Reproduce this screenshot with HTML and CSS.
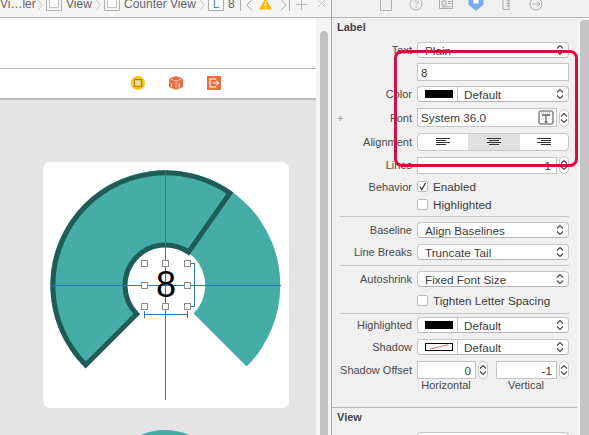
FILE: index.html
```html
<!DOCTYPE html>
<html lang="en">
<head>
    <meta charset="UTF-8">
    <title>Label Attributes</title>
    <link rel="stylesheet" href="styles.css">
</head>
<body>
    <svg class="defs">
        <symbol id="updown" viewBox="0 0 8 12">
            <path d="M1 4.5 4 1.5 7 4.5M1 7.5 4 10.5 7 7.5" fill="none" stroke="#444" stroke-width="1.1"/>
        </symbol>
        <symbol id="viewbox" viewBox="0 0 16 12">
            <path d="M.5 -1V11.5H15.5V-1" fill="#f4f4f4" stroke="#b4b4b4"/>
            <path d="M3.5 -1V8.5H12.5V-1" fill="#fff" stroke="#c4c4c4"/>
        </symbol>
    </svg>

    <div class="editor">
        <div class="crumbs">
            <span class="crumb w-vc">Vi…ler</span>
            <svg class="chev" width="5" height="12" viewBox="0 0 5 12"><path d="M.5 1 4 6 .5 11" fill="none" stroke="#ccc"/></svg>
            <svg class="box" width="16" height="12"><use href="#viewbox"/></svg>
            <span class="crumb w-v">View</span>
            <svg class="chev" width="5" height="12" viewBox="0 0 5 12"><path d="M.5 1 4 6 .5 11" fill="none" stroke="#ccc"/></svg>
            <svg class="box" width="16" height="12"><use href="#viewbox"/></svg>
            <span class="crumb w-cv">Counter View</span>
            <svg class="chev" width="5" height="12" viewBox="0 0 5 12"><path d="M.5 1 4 6 .5 11" fill="none" stroke="#ccc"/></svg>
            <span class="label-box">L</span>
            <span class="crumb w-8">8</span>
            <span class="sep"></span>
            <svg class="nav" width="7" height="12" viewBox="0 0 7 12"><path d="M6 .5 1 6 6 11.5" fill="none" stroke="#aaa"/></svg>
            <svg class="warn" width="13" height="12" viewBox="0 0 13 12"><path d="M6.5 -1 13 10.5H0Z" fill="#fdb500"/><path d="M6.5 2V7M6.5 8V9.5" stroke="#fff" stroke-width="1.5"/></svg>
            <svg class="nav-next" width="7" height="12" viewBox="0 0 7 12"><path d="M1 .5 6 6 1 11.5" fill="none" stroke="#aaa"/></svg>
            <span class="sep sep-end"></span>
            <svg class="plus" width="11" height="12" viewBox="0 0 11 12"><path d="M5.5 0V11M0 5.5H11" stroke="#b4b4b4"/></svg>
            <svg class="close" width="9" height="12" viewBox="0 0 9 12"><path d="M.5 .5 8.5 8.5M8.5 .5 .5 8.5" stroke="#c4c4c4"/></svg>
        </div>
        <div class="editor-body">
            <div class="stage">
                <div class="blank"></div>
                <div class="dock">
                    <svg width="14" height="14" viewBox="0 0 14 14">
                        <circle cx="7" cy="7" r="7" fill="#f5c211"/>
                        <rect x="3.5" y="3.5" width="7" height="7" fill="#e8c96a" stroke="#a8892a"/>
                        <rect x="5.5" y="5.5" width="3" height="3" fill="#f8e6a0"/>
                    </svg>
                    <svg width="14" height="14" viewBox="0 0 14 14">
                        <path d="M7 0 14 2.5V11L7 14 0 11V2.5Z" fill="#ee6b3f"/>
                        <path d="M0 2.5 7 5 14 2.5M7 5V14" fill="none" stroke="#fbd4c4" stroke-width=".8"/>
                        <path d="M10 7V11.5M2.5 7V11" stroke="#fff"/>
                    </svg>
                    <svg width="14" height="14" viewBox="0 0 14 14">
                        <rect width="14" height="14" fill="#f26c3d"/>
                        <path d="M8.5 4V3H3V11H8.5V10" fill="none" stroke="#fff" stroke-width="1.2"/>
                        <path d="M5.5 7H11.5M9.5 5 11.5 7 9.5 9" fill="none" stroke="#fff" stroke-width="1.2"/>
                    </svg>
                </div>
                <div class="canvas">
                    <div class="card">
                        <svg class="chart" width="246" height="246" viewBox="43 162 246 246">
                            <path class="seg" d="M84 366.6A115 115 0 1 1 246.6 366.6L193.6 313.6A40 40 0 1 0 137 313.6Z"/>
                            <path class="seg-line" d="M85.7 364.9A112.6 112.6 0 0 1 229.9 193.1L188.5 252.1A40.5 40.5 0 0 0 136.7 313.9Z"/>
                            <path class="guide" d="M51 285.5H281M165.5 170V400"/>
                            <path class="guide" d="M188 263.5H195M194.5 263.5V306.5M188 306.5H195M144.5 314.5H187.5M144.5 311V318M187.5 311V318"/>
                            <g class="handles">
                                <rect x="141.5" y="260.5" width="6" height="6"/>
                                <rect x="162.5" y="260.5" width="6" height="6"/>
                                <rect x="184.5" y="260.5" width="6" height="6"/>
                                <rect x="141.5" y="282.5" width="6" height="6"/>
                                <rect x="184.5" y="282.5" width="6" height="6"/>
                                <rect x="141.5" y="303.5" width="6" height="6"/>
                                <rect x="162.5" y="303.5" width="6" height="6"/>
                                <rect x="184.5" y="303.5" width="6" height="6"/>
                            </g>
                        </svg>
                        <span class="count">8</span>
                    </div>
                    <div class="next-chart"></div>
                </div>
            </div>
            <div class="vscroll"><div class="thumb"></div></div>
        </div>
    </div>

    <div class="inspector">
        <div class="tabs">
            <svg width="30" height="17" viewBox="0 0 30 17"><path d="M9.5 -2V10.5H20.5V1L17.5 -2" fill="none" stroke="#b0b0b0"/></svg>
            <svg width="30" height="17" viewBox="0 0 30 17"><circle cx="15" cy="4" r="6" fill="none" stroke="#b0b0b0"/><path d="M13 2.5C13.5 .5 17 .5 17 2.7 17 4 15 4 15 5.5M15 6.5V8" fill="none" stroke="#b0b0b0"/></svg>
            <svg width="30" height="17" viewBox="0 0 30 17"><path d="M8.5 -2V8.5H21.5V-2M11 1H15V5H11ZM17 1.500H20M17 3.500H20M11 6.800H20" fill="none" stroke="#a8a8a8"/></svg>
            <svg width="30" height="17" viewBox="0 0 30 17"><path d="M7.500 -2H22.500V4.500L15 11 7.500 4.500Z" fill="#76abf5"/><path d="M12.500 -2H17.500V3.500H12.500Z" fill="#fff"/></svg>
            <svg width="30" height="17" viewBox="0 0 30 17"><path d="M12 -2H18V9.500H12ZM18 1H15.500M18 3.500H15.500M18 6H15.500" fill="none" stroke="#a8a8a8"/></svg>
            <svg width="30" height="17" viewBox="0 0 30 17"><circle cx="15" cy="4" r="6" fill="none" stroke="#b0b0b0"/><path d="M11 4H19M16 1 19 4 16 7" fill="none" stroke="#b0b0b0"/></svg>
        </div>
        <div class="inspector-body">
            <div class="fields">
                <section class="label-section">
                    <h2 class="section-title">Label</h2>
                    <div class="row first">
                        <label class="row-label">Text</label>
                        <div class="popup"><span>Plain</span><svg class="updown"><use href="#updown"/></svg></div>
                    </div>
                    <div class="row">
                        <span class="row-label"></span>
                        <div class="textfield h18">8</div>
                    </div>
                    <div class="row">
                        <label class="row-label">Color</label>
                        <div class="popup color-popup"><i class="swatch"></i><span>Default</span><svg class="updown"><use href="#updown"/></svg></div>
                    </div>
                    <div class="row wide-gap">
                        <label class="row-label with-plus"><span class="plus-mark">+</span>Font</label>
                        <div class="textfield short h19">System 36.0
                            <svg class="font-btn" width="16" height="15" viewBox="0 0 16 15">
                                <rect x="1" y="1" width="14" height="13" rx="2" fill="#fff" stroke="#8a8a8a" stroke-width="1.6"/>
                                <path d="M3 3H13" stroke="#9a9a9a" stroke-dasharray="1 1"/>
                                <path d="M4.500 6V5H11.500V6M8 5V12M6.500 12H9.500" fill="none" stroke="#666" stroke-width="1.300"/>
                            </svg>
                        </div>
                        <div class="stepper"><svg class="updown"><use href="#updown"/></svg></div>
                    </div>
                    <div class="row wide-gap">
                        <label class="row-label">Alignment</label>
                        <div class="segments">
                            <div class="segment"><svg width="14" height="8" viewBox="0 0 14 8"><path d="M0 .5H14M0 2.500H10M0 4.500H14M0 6.500H10" stroke="#333"/></svg></div>
                            <div class="segment active"><svg width="14" height="8" viewBox="0 0 14 8"><path d="M0 .5H14M2 2.500H12M0 4.500H14M2 6.500H12" stroke="#333"/></svg></div>
                            <div class="segment"><svg width="14" height="8" viewBox="0 0 14 8"><path d="M0 .5H14M4 2.500H14M0 4.500H14M4 6.500H14" stroke="#333"/></svg></div>
                        </div>
                    </div>
                    <div class="row">
                        <label class="row-label">Lines</label>
                        <div class="textfield short h17 number">1</div>
                        <div class="stepper"><svg class="updown"><use href="#updown"/></svg></div>
                    </div>
                    <div class="row check-first">
                        <label class="row-label">Behavior</label>
                        <div class="check"><i class="box-check"><svg width="11" height="11" viewBox="0 0 11 11"><path d="M2.800 5.500 4.800 8.500 8.500 2" fill="none" stroke="#333" stroke-width="1.300"/></svg></i>Enabled</div>
                    </div>
                    <div class="row check-next">
                        <span class="row-label"></span>
                        <div class="check"><i class="box-check"></i>Highlighted</div>
                    </div>
                    <hr class="rule after-check">
                    <div class="row">
                        <label class="row-label">Baseline</label>
                        <div class="popup"><span>Align Baselines</span><svg class="updown"><use href="#updown"/></svg></div>
                    </div>
                    <div class="row wide-gap">
                        <label class="row-label">Line Breaks</label>
                        <div class="popup"><span>Truncate Tail</span><svg class="updown"><use href="#updown"/></svg></div>
                    </div>
                    <hr class="rule">
                    <div class="row">
                        <label class="row-label">Autoshrink</label>
                        <div class="popup"><span>Fixed Font Size</span><svg class="updown"><use href="#updown"/></svg></div>
                    </div>
                    <div class="row check-tighten">
                        <span class="row-label"></span>
                        <div class="check"><i class="box-check"></i>Tighten Letter Spacing</div>
                    </div>
                    <hr class="rule after-tighten">
                    <div class="row rule-close">
                        <label class="row-label">Highlighted</label>
                        <div class="popup color-popup"><i class="swatch"></i><span>Default</span><svg class="updown"><use href="#updown"/></svg></div>
                    </div>
                    <div class="row wide-gap">
                        <label class="row-label">Shadow</label>
                        <div class="popup color-popup">
                            <i class="swatch none"><svg width="28" height="8" viewBox="0 0 28 8"><path d="M2 7 26 1" stroke="#ef3b3b"/></svg></i>
                            <span>Default</span><svg class="updown"><use href="#updown"/></svg>
                        </div>
                    </div>
                    <div class="row wide-gap">
                        <label class="row-label">Shadow Offset</label>
                        <div class="offset">
                            <div class="offset-field">
                                <div class="textfield number h18 off-h">0</div>
                                <div class="stepper"><svg class="updown"><use href="#updown"/></svg></div>
                            </div>
                            <div class="offset-field">
                                <div class="textfield number h18 off-v">-1</div>
                                <div class="stepper"><svg class="updown"><use href="#updown"/></svg></div>
                            </div>
                        </div>
                    </div>
                    <div class="offset-captions">
                        <span class="cap-h">Horizontal</span>
                        <span class="cap-v">Vertical</span>
                    </div>
                </section>
                <section class="view-section">
                    <h2 class="section-title">View</h2>
                    <div class="row view-row">
                        <span class="row-label"></span>
                        <div class="popup"></div>
                    </div>
                </section>
            </div>
            <div class="side-scroll"><div class="side-thumb"></div></div>
        </div>
        <div class="callout"></div>
    </div>
</body>
</html>
```

FILE: styles.css
```css
* {
    box-sizing: border-box;
}
html, body {
    margin: 0;
    height: 100%;
    overflow: hidden;
}
body {
    display: flex;
    width: 589px;
    height: 435px;
    font-family: "Liberation Sans", Arial, sans-serif;
    font-size: 11.7px;
    color: #3c3c3c;
    background: #f0f0f0;
}
.defs {
    position: absolute;
    width: 0;
    height: 0;
}

/* left side */
.editor {
    width: 332px;
    height: 435px;
    flex: none;
    display: flex;
    flex-direction: column;
    border-right: 1px solid #a8a8a8;
}
.crumbs {
    height: 18px;
    flex: none;
    display: flex;
    align-items: flex-end;
    overflow: hidden;
    padding-bottom: 6px;
    background: #f5f5f5;
    border-bottom: 1px solid #b5b5b5;
}
.crumbs svg {
    flex: none;
    display: block;
}
.crumb {
    flex: none;
    font-size: 12px;
    line-height: 14px;
    height: 14px;
    white-space: nowrap;
    color: #666;
}
.w-vc {
    width: 38px;
}
.w-v {
    width: 30px;
}
.w-cv {
    width: 76px;
}
.w-8 {
    width: 7px;
}
.chev {
    margin-right: 3px;
}
.box {
    margin-right: 4px;
}
.label-box {
    flex: none;
    width: 16px;
    height: 13px;
    margin-right: 4px;
    text-align: center;
    font-size: 12px;
    line-height: 12px;
    color: #3f8cf0;
    background: #fff;
    border: 1px solid #a9a9a9;
    border-top: 0;
}
.sep {
    flex: none;
    width: 1px;
    height: 12px;
    margin: 0 5px;
    background: #aaa;
}
.sep-end {
    margin: 0 6px 0 2px;
}
.warn {
    margin: 0 8px 0 6px;
}
.plus {
    margin-right: 10px;
}

.editor-body {
    flex: 1;
    display: flex;
    min-height: 0;
}
.stage {
    width: 316px;
    flex: none;
    display: flex;
    flex-direction: column;
    background: #fff;
}
.blank {
    height: 51px;
    flex: none;
    border-bottom: 1px solid #b8b8b8;
}
.dock {
    height: 31px;
    flex: none;
    display: flex;
    align-items: center;
    gap: 24px;
    padding: 0 0 2px 131px;
    border-bottom: 2px solid #bcbcbc;
}
.dock svg {
    display: block;
}
.canvas {
    flex: 1;
    min-height: 0;
    overflow: hidden;
    padding: 62px 0 0 43px;
    background: #e4e4e4;
}
.card {
    position: relative;
    width: 246px;
    height: 246px;
    border-radius: 7px;
    background: #fff;
}
.chart {
    display: block;
}
.seg {
    fill: #45ada6;
}
.seg-line {
    fill: none;
    stroke: #205c56;
    stroke-width: 5;
}
.guide {
    fill: none;
    stroke: #2b75b5;
    stroke-width: 1;
}
.handles rect {
    fill: #fff;
    stroke: #8a8a8a;
}
.count {
    position: absolute;
    left: 112px;
    top: 103px;
    width: 22px;
    text-align: center;
    font-size: 36px;
    line-height: 40px;
    color: #000;
}
.next-chart {
    width: 120px;
    height: 120px;
    margin: 22px 0 0 62px;
    border-radius: 50%;
    background: #45ada6;
}
.vscroll {
    flex: 1;
    padding: 13px 2px 0 4px;
    background: #f5f5f5;
}
.thumb {
    width: 8px;
    height: 100%;
    border-radius: 4px 4px 0 0;
    background: #c2c2c2;
}

/* right side */
.inspector {
    position: relative;
    flex: 1;
    height: 435px;
    display: flex;
    flex-direction: column;
    min-width: 0;
}
.tabs {
    height: 18px;
    flex: none;
    display: flex;
    padding-left: 39px;
    overflow: hidden;
    border-bottom: 1px solid #b5b5b5;
}
.tabs svg {
    flex: none;
    display: block;
}
.inspector-body {
    flex: 1;
    display: flex;
    min-height: 0;
}
.fields {
    width: 245px;
    flex: none;
    overflow: hidden;
}
.label-section {
    height: 390px;
    border-bottom: 1px solid #b8b8b8;
}
.section-title {
    margin: 0;
    padding: 3px 0 0 5px;
    height: 18px;
    font-size: 11px;
    line-height: 13px;
    font-weight: bold;
    color: #444;
}
.row {
    display: flex;
    align-items: center;
    margin-top: 5px;
    padding-right: 8px;
}
.first {
    margin-top: 6px;
}
.wide-gap {
    margin-top: 6px;
}
.check-first {
    margin-top: 7px;
    height: 11px;
}
.check-next {
    margin-top: 7px;
    height: 11px;
}
.check-tighten {
    margin-top: 8px;
    height: 11px;
}
.rule-close {
    margin-top: 3px;
}
.row-label {
    width: 85px;
    flex: none;
    padding-right: 5px;
    text-align: right;
    white-space: nowrap;
    font-size: 11px;
    color: #4a4a4a;
}
.with-plus {
    display: flex;
    justify-content: space-between;
}
.plus-mark {
    margin-left: 5px;
    color: #999;
}
.popup {
    flex: 1;
    display: flex;
    align-items: center;
    height: 16px;
    padding: 0 4px 0 7px;
    background: #fff;
    border: 1px solid #c6c6c6;
    border-bottom-color: #b4b4b4;
    border-radius: 4px;
}
.popup span {
    flex: 1;
}
.updown {
    width: 8px;
    height: 12px;
    flex: none;
}
.color-popup {
    padding-left: 0;
}
.swatch {
    width: 40px;
    height: 100%;
    flex: none;
    margin-right: 6px;
    border-right: 1px solid #c6c6c6;
    background: linear-gradient(#000, #000) 7px 3px / 28px 8px no-repeat;
    display: block;
}
.swatch.none {
    background: none;
    padding: 3px 0 0 7px;
}
.swatch.none svg {
    display: block;
    border: 1px solid #000;
    background: #fff;
}
.textfield {
    flex: 1;
    display: flex;
    align-items: center;
    padding: 0 3px;
    background: #fff;
    border: 1px solid #c4c4c4;
}
.h17 {
    height: 17px;
}
.h18 {
    height: 18px;
}
.h19 {
    height: 19px;
}
.short {
    flex: none;
    width: 140px;
    justify-content: space-between;
    padding-right: 2px;
}
.number {
    justify-content: flex-end;
    padding-right: 4px;
}
.short.number {
    justify-content: flex-end;
    padding-right: 5px;
}
.font-btn {
    flex: none;
}
.stepper {
    width: 10px;
    height: 18px;
    flex: none;
    margin-left: 2px;
    display: flex;
    align-items: center;
    justify-content: center;
    background: #fff;
    border: 1px solid #c6c6c6;
    border-radius: 5px;
}
.stepper .updown {
    width: 8px;
    height: 14px;
}
.segments {
    flex: 1;
    display: grid;
    grid-template-columns: 50px 52px 1fr;
    height: 18px;
    overflow: hidden;
    background: #fff;
    border: 1px solid #c6c6c6;
    border-radius: 4px;
}
.segment {
    display: flex;
    align-items: center;
    justify-content: center;
}
.segment.active {
    background: #e0e0e0;
}
.check {
    display: flex;
    align-items: center;
    gap: 5px;
    white-space: nowrap;
}
.box-check {
    width: 11px;
    height: 11px;
    flex: none;
    display: block;
    background: #fff;
    border: 1px solid #bdbdbd;
    border-radius: 2px;
}
.box-check svg {
    display: block;
    margin: -1px;
}
.rule {
    height: 1px;
    margin: 5px 8px 0 8px;
    border: 0;
    background: #c6c6c6;
}
.after-check {
    margin-top: 6px;
}
.after-tighten {
    margin-top: 7px;
}
.offset {
    flex: 1;
    display: flex;
    justify-content: space-between;
}
.offset-field {
    display: flex;
    align-items: center;
}
.off-h {
    flex: none;
    width: 59px;
}
.off-v {
    flex: none;
    width: 61px;
}
.offset-captions {
    display: flex;
    height: 13px;
    line-height: 13px;
    font-size: 11px;
    color: #4a4a4a;
}
.cap-h {
    margin-left: 84px;
    width: 60px;
    text-align: center;
}
.cap-v {
    margin-left: 20px;
    width: 60px;
    text-align: center;
}
.view-row {
    margin-top: 6px;
}
.side-scroll {
    flex: 1;
    padding: 2px 0 0 3px;
    background: #f5f5f5;
}
.side-thumb {
    height: 100%;
    border-radius: 4px 0 0 0;
    background: #c4c4c4;
}
.callout {
    position: absolute;
    left: 62px;
    top: 50px;
    width: 184px;
    height: 117px;
    border: 3px solid #d0103f;
    border-radius: 8px;
}
```
